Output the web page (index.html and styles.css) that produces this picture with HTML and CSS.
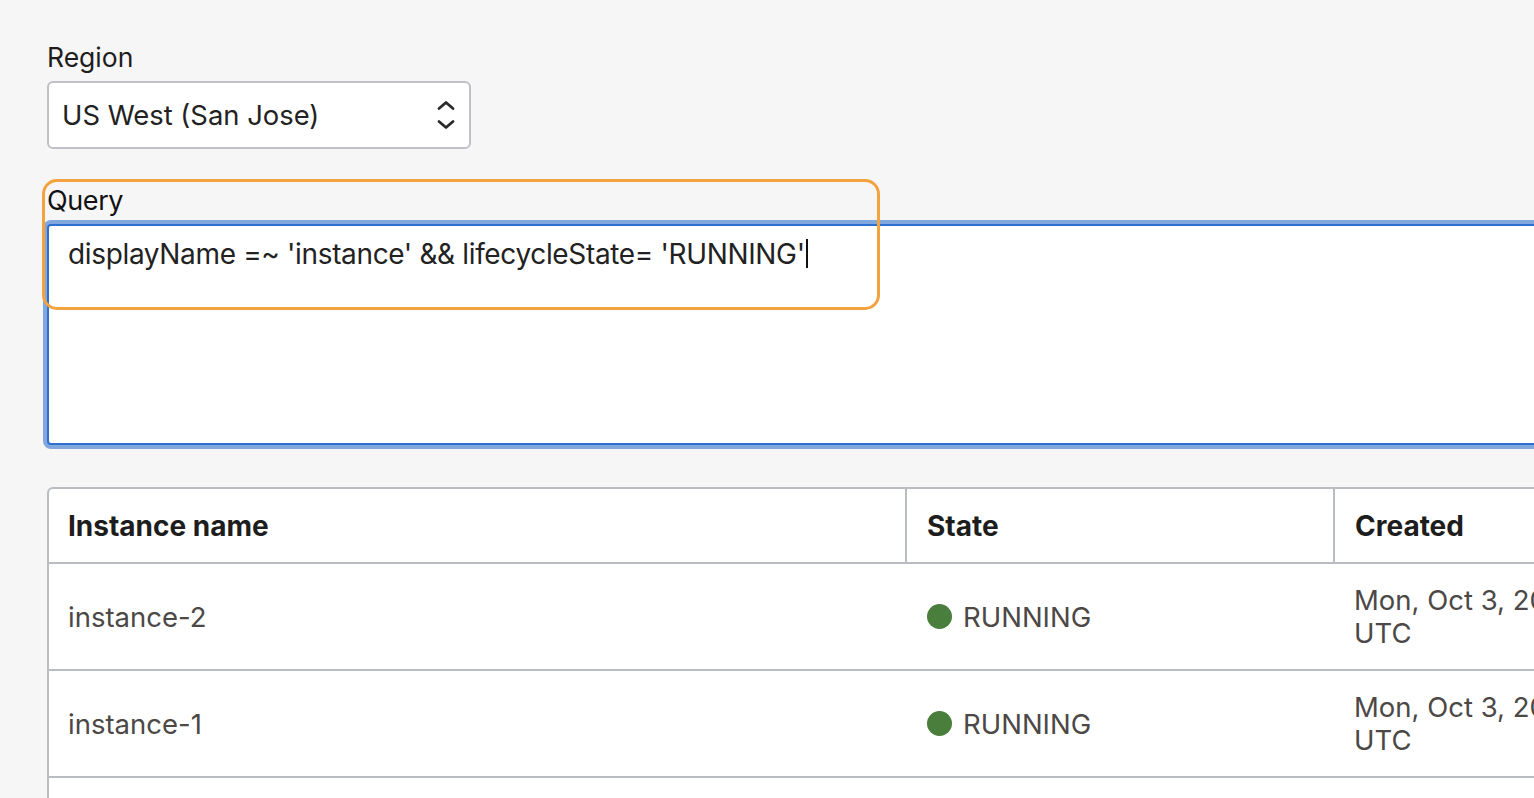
FILE: index.html
```html
<!DOCTYPE html>
<html lang="en">
<head>
<meta charset="utf-8">
<title>Instances query</title>
<link rel="stylesheet" href="styles.css">
</head>
<body>
<main class="page">
  <div class="field">
    <label class="field-label">Region</label>
    <div class="select">
      <span class="select-value">US West (San Jose)</span>
      <svg class="chevron" width="20" height="32" viewBox="0 0 20 32" aria-hidden="true">
        <path d="M3 9.5 L10 3.5 L17 9.5" fill="none" stroke="#2a2a2a" stroke-width="2.8" stroke-linecap="round" stroke-linejoin="round"/>
        <path d="M3 22.5 L10 28.5 L17 22.5" fill="none" stroke="#2a2a2a" stroke-width="2.8" stroke-linecap="round" stroke-linejoin="round"/>
      </svg>
    </div>
  </div>

  <div class="query-field">
    <div class="query-label">Query</div>
    <div class="textarea">
      <span class="query-text">displayName =~ 'instance' &amp;&amp; lifecycleState= 'RUNNING'</span><span class="caret"></span>
    </div>
    <div class="annotation"></div>
  </div>

  <div class="table">
    <div class="th">Instance name</div>
    <div class="th">State</div>
    <div class="th">Created</div>

    <div class="td">instance-2</div>
    <div class="td"><span class="dot"></span>RUNNING</div>
    <div class="td date">Mon, Oct 3, 2022, 10:14:32 AM<br>UTC</div>

    <div class="td">instance-1</div>
    <div class="td"><span class="dot"></span>RUNNING</div>
    <div class="td date">Mon, Oct 3, 2022, 10:12:08 AM<br>UTC</div>

    <div class="td"></div>
    <div class="td"></div>
    <div class="td"></div>
  </div>
</main>
</body>
</html>
```

FILE: styles.css
```css
html, body {
  margin: 0;
  padding: 0;
  background: #f6f6f6;
  overflow: hidden;
}

body {
  font-family: Inter, "Noto Sans", "Liberation Sans", sans-serif;
  color: #1f1f1f;
  width: 1534px;
  height: 798px;
}

.page {
  padding: 42px 0 0 47px;
}

.field {
  display: flex;
  flex-direction: column;
}

.field-label {
  font-size: 26.5px;
  line-height: 30px;
  color: #1d1d1d;
}

.select {
  margin-top: 9px;
  box-sizing: border-box;
  width: 424px;
  height: 68px;
  background: #fff;
  border: 2px solid #bfc1c4;
  border-radius: 6px;
  display: flex;
  align-items: center;
  justify-content: space-between;
  padding: 0 13px 0 13px;
}

.select-value {
  font-size: 27.4px;
  color: #222;
}

.chevron {
  display: block;
}

.query-field {
  position: relative;
  margin-top: 37px;
}

.query-label {
  font-size: 27px;
  line-height: 30px;
  color: #111;
  letter-spacing: -0.4px;
}

.textarea {
  margin-top: 8px;
  box-sizing: border-box;
  width: 1600px;
  height: 221px;
  background: #fff;
  border: 2px solid #2f6fcf;
  border-radius: 4px;
  box-shadow: 0 0 0 4px #80a8de;
  padding: 13px 19px;
  font-size: 28px;
  line-height: 30px;
  color: #222;
  display: flex;
  align-items: flex-start;
}

.query-text {
  letter-spacing: -0.35px;
  white-space: pre;
}

.caret {
  display: inline-block;
  width: 2px;
  height: 29px;
  margin-left: 1px;
  background: #111;
}

.annotation {
  position: absolute;
  left: -5px;
  top: -7px;
  width: 838px;
  height: 131px;
  box-sizing: border-box;
  border: 3px solid #f3a33d;
  border-radius: 15px;
  pointer-events: none;
}

.table {
  margin-top: 42px;
  width: 1700px;
  display: grid;
  grid-template-columns: 856px 428px 1fr;
  background: #fff;
  border-top: 2px solid #b9bcc0;
  border-left: 2px solid #b9bcc0;
  border-top-left-radius: 6px;
}

.th {
  box-sizing: border-box;
  height: 75px;
  display: flex;
  align-items: center;
  padding-left: 19px;
  font-size: 28px;
  font-weight: 700;
  color: #1d1d1d;
  border-bottom: 2px solid #b9bcc0;
}

.th + .th {
  border-left: 2px solid #b9bcc0;
  padding-left: 20px;
}

.td {
  box-sizing: border-box;
  height: 107px;
  display: flex;
  align-items: center;
  padding-left: 19px;
  font-size: 27.5px;
  color: #4b4846;
  border-bottom: 2px solid #b9bcc0;
}

.td:nth-child(3n+2) {
  padding-left: 22px;
}

.td:nth-child(3n) {
  padding-left: 21px;
}

.date {
  display: block;
  padding-top: 20px;
  line-height: 33px;
  white-space: nowrap;
}

.dot {
  display: inline-block;
  width: 25px;
  height: 25px;
  border-radius: 50%;
  background: #4a7e3c;
  margin-right: 11px;
}
```
